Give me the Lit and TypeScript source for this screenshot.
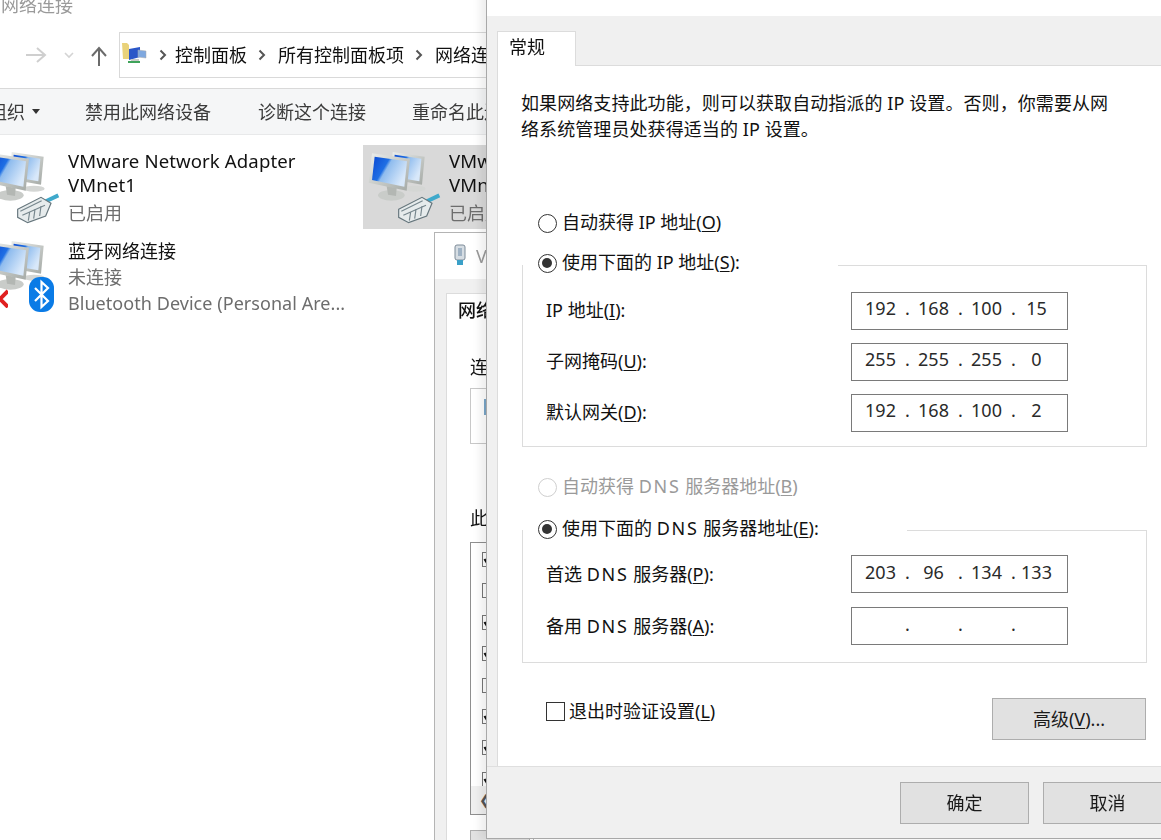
import { LitElement, html, css, svg } from "lit";
import { customElement } from "lit/decorators.js";

const FONT = css`"Noto Sans", "Noto Sans CJK SC", sans-serif`;

const netIcon = (plug: boolean) => svg`
<svg class="net" viewBox="0 0 270 270" width="90" height="90">
  <defs>
    <linearGradient id="scr" x1="0" y1="0" x2="1" y2="0.5">
      <stop offset="0" stop-color="#0a48d2"/><stop offset=".42" stop-color="#1f6fe4"/>
      <stop offset=".5" stop-color="#8fbcee"/><stop offset="1" stop-color="#d8e8fa"/>
    </linearGradient>
    <linearGradient id="bez" x1="0" y1="0" x2="1" y2="1">
      <stop offset="0" stop-color="#eceeec"/><stop offset="1" stop-color="#a4a9a5"/>
    </linearGradient>
  </defs>
  <path d="M98 36 L194 50 L186 134 L94 118Z" fill="url(#bez)"/>
  <path d="M104 44 L184 56 L178 124 L98 110Z" fill="url(#scr)"/>
  <ellipse cx="165" cy="146" rx="32" ry="9" fill="#d4d6d4"/>
  <ellipse cx="94" cy="166" rx="40" ry="16" fill="#c9ccc9"/>
  <path d="M80 138 L110 144 L108 168 L84 164Z" fill="#b3b7b3"/>
  <path d="M36 40 L150 56 L140 152 L26 128Z" fill="url(#bez)"/>
  <path d="M44 50 L141 64 L133 140 L36 120Z" fill="url(#scr)"/>
  ${plug ? svg`
  <path d="M196 186 L238 166" stroke="#3fa9cb" stroke-width="12" fill="none"/>
  <path d="M116 208 L186 172 L216 190 L200 228 L146 248 L116 232Z" fill="#e6ebec" stroke="#66767d" stroke-width="3.500"/>
  <path d="M124 214 L188 182 M130 226 L198 196 M148 242 L152 216 M164 236 L168 208 M182 228 L186 198" stroke="#76868d" stroke-width="3.500" fill="none"/>` : ""}
</svg>`;

const chev = (cls: string) => svg`<svg class="chev ${cls}" width="8" height="12" viewBox="0 0 8 12"><path d="M1.500 1.500L6 6l-4.500 4.500" stroke="#555" stroke-width="2" fill="none"/></svg>`;

@customElement("app-root")
export class AppRoot extends LitElement {
  static styles = css`
    :host { display: block; position: relative; width: 1161px; height: 840px; overflow: hidden;
      background: #fff; color: #111; font: 18px/24px ${FONT}; }
    .root { filter: blur(0.35px); width: 1161px; height: 840px; position: relative; overflow: hidden; }

    .explorer { display: flex; flex-direction: column; }
    .wintitle { margin: -7px 0 0 1px; line-height: 24px; color: #9a9a9a; padding-bottom: 15px; height: 24px; }
    .nav { display: flex; align-items: center; height: 46px; }
    .nav svg { display: block; }
    .navs { width: 119px; display: flex; align-items: center; flex: none; }
    .crumb { flex: 1; height: 46px; box-sizing: border-box; border: 1px solid #d9d9d9; display: flex; align-items: center; white-space: nowrap; overflow: hidden; }
    .crumb .home { margin-left: 2px; flex: none; }
    .crumb span { color: #111; }
    .chev { flex: none; }
    .chev.c1 { margin: 0 8px 0 11px; }
    .chev.c2 { margin: 0 12px 0 11px; }
    .chev.c3 { margin: 0 12px 0 11px; }
    .toolbar { margin-top: 10px; height: 47px; box-sizing: border-box; background: #f5f6f7; border-top: 1px solid #d9d9d9; border-bottom: 1px solid #e8e9ea;
      display: flex; align-items: center; white-space: nowrap; color: #3b3b3b; overflow: hidden; }
    .toolbar .org { margin-left: -11px; display: flex; align-items: center; gap: 7px; width: 96px; flex: none; }
    .toolbar .cmd { flex: none; }
    .toolbar .w1 { width: 173px; }
    .toolbar .w2 { width: 154px; }
    .tiles { display: grid; grid-template-columns: 381px 381px; margin: 10px 0 0 -18px; grid-auto-rows: min-content; row-gap: 5px; }
    .tile { display: flex; height: 84px; }
    .tile.sel { background: #d9d9d9; }
    .iconbox { position: relative; flex: none; width: 86px; }
    .iconbox .net { position: absolute; left: -3px; top: -5px; }
    .badge { position: absolute; }
    .badge.x { left: 18px; top: 54px; }
    .badge.bth { left: 47px; top: 43px; }
    .tx { padding-top: 4px; white-space: nowrap; }
    .tx div { height: 24px; line-height: 24px; }
    .tx .vm { font-size: 18.6px; letter-spacing: .1px; }
    .tx .sub { color: #6d6d6d; margin-top: 4px; }
    .tile.bt .tx { padding-top: 5px; }
    .tile.bt .tx .sub { margin-top: 1px; height: 26px; line-height: 26px; }
    .tile.bt .tx .sub.dev { margin-top: 0; letter-spacing: .05px; }

    .dlg1 { position: absolute; left: 434px; top: 232px; width: 100px; height: 640px; box-sizing: border-box; border: 1px solid #b4b4b4; background: #f0f0f0; overflow: hidden; white-space: nowrap; }
    .dlg1 .t { height: 46px; background: #fff; display: flex; align-items: center; padding-left: 18px; gap: 9px; color: #9a9a9a; }
    .dlg1 .t svg { flex: none; }
    .dlg1 .tab { margin: 14px 0 0 11px; height: 34px; background: #fff; width: 80px; padding-left: 11px; line-height: 32px; box-sizing: border-box; font-weight: 500; border: 1px solid #dcdcdc; border-bottom: 0; }
    .dlg1 .page { margin-left: 11px; height: 560px; background: #fff; padding: 28px 0 0 23px; box-sizing: border-box; border-left: 1px solid #dcdcdc; }
    .dlg1 .lab { height: 24px; line-height: 24px; }
    .dlg1 .conn { margin: 9px 0 0; height: 56px; box-sizing: border-box; border: 1px solid #c8c8c8; padding: 10px 0 0 13px; }
    .dlg1 .conn i { display: block; width: 6px; height: 16px; background: #7aa6c8; }
    .dlg1 .lab2 { margin-top: 62px; }
    .dlg1 .list { margin-top: 12px; height: 273px; box-sizing: border-box; border: 1px solid #8f8f8f; padding-top: 9px; position: relative; }
    .dlg1 .ck { display: block; width: 13px; height: 15px; margin: 0 0 16.4px 11px; border: 1px solid #777; box-sizing: border-box; background: #fff; }
    .dlg1 .ck svg { display: block; }
    .dlg1 .sb { position: absolute; left: 0; right: 0; bottom: 0; height: 28px; background: #f0f0f0; color: #555; font-size: 14px; line-height: 28px; padding-left: 8px; box-sizing: border-box; }
    .dlg1 .btn { margin-top: 15px; width: 60px; height: 24px; background: #e1e1e1; border: 1px solid #adadad; }

    .dlg2 { position: absolute; left: 486px; top: -30px; width: 700px; height: 869px; box-sizing: border-box; border: 1px solid #a8a8a8; border-right: 0; background: #f0f0f0;
      box-shadow: -6px 0 8px rgba(0,0,0,.07); }
    .dlg2 .t { height: 45px; background: #fff; padding-left: 125px; line-height: 38px; color: #444; white-space: nowrap; overflow: hidden; box-sizing: border-box; }
    .dlg2 .tabs { height: 50px; padding: 15px 0 0 10px; box-sizing: border-box; display: flex; align-items: flex-end; }
    .dlg2 .tab { width: 79px; height: 35px; background: #fff; border: 1px solid #dcdcdc; border-bottom: 0; box-sizing: border-box; padding-left: 12px; line-height: 30px; }
    .dlg2 .tab span { margin-left: -1px; }
    .dlg2 .tabs .rest { flex: 1; height: 1px; background: #dcdcdc; }
    .page2 { margin-left: 10px; height: 700px; background: #fff; border-left: 1px solid #dcdcdc; box-sizing: border-box; padding: 24px 0 0 24px; position: relative; }
    .intro { width: 600px; line-height: 26px; margin-left: -1px; letter-spacing: .08px; }
    .intro p { margin: 0; height: 26px; white-space: nowrap; }
    .auto { display: flex; align-items: center; height: 24px; white-space: nowrap; }
    .auto.a1 { margin-top: 68px; }
    .auto.a2 { margin-top: 27px; }
    .radio { width: 19px; height: 19px; box-sizing: border-box; border: 1.5px solid #333; border-radius: 50%; flex: none; margin: 3px 5px 0 16px; background: #fff; position: relative; }
    .radio.on::after { content: ""; position: absolute; left: 3px; top: 3px; width: 10px; height: 10px; border-radius: 50%; background: #333; }
    .radio.off { border-color: #cfcfcf; }
    .dis { color: #9a9a9a; }
    .dns { letter-spacing: 1.7px; }
    .group { border: 1px solid #dcdcdc; width: 625px; box-sizing: border-box; padding: 26px 0 0 23px; position: relative; }
    .group.g1 { margin-top: 31px; height: 182px; }
    .group.g2 { margin-top: 32px; height: 133px; padding-top: 24px; }
    .group.g2 .row { margin-bottom: 14px; }
    .group .legend { position: absolute; left: 0; top: -17px; background: #fff; display: flex; align-items: center; height: 26px; padding-right: 94px; white-space: nowrap; }
    .group.g1 .legend { padding-right: 98px; }
    .group.g2 .legend { top: -16px; padding-right: 88px; }
    .group .legend .radio { margin-left: 15px; }
    .group .row { display: flex; align-items: center; height: 38px; white-space: nowrap; justify-content: space-between; padding-right: 78px; margin-bottom: 13px; }
    .group .row:last-child { margin-bottom: 0; }
    .group.g1 .row > span { margin-top: -2px; }
    .ip { width: 217px; height: 38px; box-sizing: border-box; border: 1px solid #7a7a7a; display: grid; grid-template-columns: 53px 53px 53px 47px; padding: 0 0 5px 2px; align-items: center; text-align: center; background: #fff; color: #2a2a2a; }
    .group.g1 .ip { padding-bottom: 7px; }
    .ip b { font-weight: 400; position: relative; }
    .ip b + b::before { content: "."; position: absolute; left: -2px; }
    u { text-decoration-thickness: 1px; text-underline-offset: 2px; }
    .bottom { display: flex; justify-content: space-between; align-items: flex-start; width: 625px; margin-top: 35px; }
    .chk { display: flex; align-items: center; gap: 4px; white-space: nowrap; margin: 1px 0 0 24px; }
    .chk i { display: block; width: 19px; height: 19px; border: 1.5px solid #333; box-sizing: border-box; }
    .btn { background: #e1e1e1; border: 1px solid #adadad; box-sizing: border-box; text-align: center; color: #1a1a1a; }
    .adv { width: 154px; height: 42px; line-height: 40px; margin-right: 1px; }
    .foot { height: 72px; display: flex; padding: 15px 0 0 413px; gap: 14px; box-sizing: border-box; background: #f0f0f0; border-top: 1px solid #dfdfdf; }
    .foot .btn { width: 129px; height: 42px; line-height: 40px; flex: none; }
  `;

  private ip(a: string[]) {
    return html`<div class="ip">${a.map((x) => html`<b>${x || "\u00a0"}</b>`)}</div>`;
  }

  render() {
    return html`<div class="root">
      <div class="explorer">
        <div class="wintitle">网络连接</div>
        <div class="nav">
          <div class="navs">
            <svg width="119" height="46" viewBox="0 0 119 46" fill="none">
              <path d="M26 23H44M37 16l8 7-8 7" stroke="#cfcfcf" stroke-width="2"/>
              <path d="M65 21l4 4 4-4" stroke="#d4d4d4" stroke-width="1.6"/>
              <path d="M99 34V16M92 24l7-8 7 8" stroke="#6b6b6b" stroke-width="2"/>
            </svg>
          </div>
          <div class="crumb">
            <svg class="home" width="26" height="26" viewBox="0 0 26 26">
              <path d="M0 1h5l2 2v14H1z" fill="#e9d27a"/>
              <path d="M7 7l11-2v10L7 18z" fill="#2a56c8"/>
              <path d="M16 8l8 1v7l-8-1z" fill="#7fa8df" stroke="#aaa" stroke-width=".5"/>
              <path d="M6 19h12v2H6z" fill="#3fa35a"/>
              <path d="M9 17h8v2H9z" fill="#c9c9c9"/>
            </svg>
            ${chev("c1")}<span>控制面板</span>
            ${chev("c2")}<span>所有控制面板项</span>
            ${chev("c3")}<span>网络连接</span>
          </div>
        </div>
        <div class="toolbar">
          <div class="org">组织 <svg width="8" height="5" viewBox="0 0 8 5"><path d="M0 0h8L4 5z" fill="#333"/></svg></div>
          <div class="cmd w1">禁用此网络设备</div>
          <div class="cmd w2">诊断这个连接</div>
          <div class="cmd">重命名此连接</div>
        </div>
        <div class="tiles">
          <div class="tile">
            <div class="iconbox">${netIcon(true)}</div>
            <div class="tx"><div class="vm">VMware Network Adapter</div><div class="vm">VMnet1</div><div class="sub">已启用</div></div>
          </div>
          <div class="tile sel">
            <div class="iconbox">${netIcon(true)}</div>
            <div class="tx"><div class="vm">VMware Network Adapter</div><div class="vm">VMnet8</div><div class="sub">已启用</div></div>
          </div>
          <div class="tile bt">
            <div class="iconbox">${netIcon(false)}
              <svg class="badge x" width="8" height="20" viewBox="0 0 8 20"><path d="M-8 3L8 19M8 3L-8 19" stroke="#e02020" stroke-width="4"/></svg>
              <svg class="badge bth" width="25" height="35" viewBox="0 0 25 35"><rect width="25" height="35" rx="11" fill="#0a7be6"/><path d="M6 11l13 13-6.500 6V5L19 11 6 24" stroke="#fff" stroke-width="2.200" fill="none"/></svg>
            </div>
            <div class="tx"><div>蓝牙网络连接</div><div class="sub">未连接</div><div class="sub dev">Bluetooth Device (Personal Are...</div></div>
          </div>
        </div>
      </div>

      <div class="dlg1">
        <div class="t"><svg width="14" height="24" viewBox="0 0 14 24"><rect x="2" y="1" width="10" height="15" rx="2" fill="#d6dde3" stroke="#7d8b98"/><rect x="4" y="16" width="6" height="5" fill="#3aa0c8"/><rect x="5" y="4" width="4" height="8" fill="#9fb2c4"/></svg><span>VMware</span></div>
        <div class="tab">网络</div>
        <div class="page">
          <div class="lab">连接时使用</div>
          <div class="conn"><i></i></div>
          <div class="lab lab2">此连接使用下列项目</div>
          <div class="list">
            ${[1, 0, 1, 1, 0, 1, 1, 1].map((c) => html`<span class="ck">${c ? svg`<svg width="11" height="13" viewBox="0 0 11 13"><path d="M1.500 6l2.500 4 5-8" stroke="#111" stroke-width="2.200" fill="none"/></svg>` : ""}</span>`)}
            <div class="sb">❮</div>
          </div>
          <div class="btn"></div>
        </div>
      </div>

      <div class="dlg2">
        <div class="t">Internet 协议版本 4 (TCP/IPv4) 属性</div>
        <div class="tabs"><div class="tab"><span>常规</span></div><div class="rest"></div></div>
        <div class="page2">
          <div class="intro">
            <p>如果网络支持此功能，则可以获取自动指派的 IP 设置。否则，你需要从网</p>
            <p>络系统管理员处获得适当的 IP 设置。</p>
          </div>
          <div class="auto a1"><span class="radio"></span><span>自动获得 IP 地址(<u>O</u>)</span></div>
          <div class="group g1">
            <div class="legend"><span class="radio on"></span><span>使用下面的 IP 地址(<u>S</u>):</span></div>
            <div class="row"><span>IP 地址(<u>I</u>):</span>${this.ip(["192", "168", "100", "15"])}</div>
            <div class="row"><span>子网掩码(<u>U</u>):</span>${this.ip(["255", "255", "255", "0"])}</div>
            <div class="row"><span>默认网关(<u>D</u>):</span>${this.ip(["192", "168", "100", "2"])}</div>
          </div>
          <div class="auto a2 dis"><span class="radio off"></span><span>自动获得 <span class="dns">DNS</span> 服务器地址(<u>B</u>)</span></div>
          <div class="group g2">
            <div class="legend"><span class="radio on"></span><span>使用下面的 <span class="dns">DNS</span> 服务器地址(<u>E</u>):</span></div>
            <div class="row"><span>首选 <span class="dns">DNS</span> 服务器(<u>P</u>):</span>${this.ip(["203", "96", "134", "133"])}</div>
            <div class="row"><span>备用 <span class="dns">DNS</span> 服务器(<u>A</u>):</span>${this.ip(["", "", "", ""])}</div>
          </div>
          <div class="bottom">
            <div class="chk"><i></i><span>退出时验证设置(<u>L</u>)</span></div>
            <div class="btn adv">高级(<u>V</u>)...</div>
          </div>
        </div>
        <div class="foot"><div class="btn">确定</div><div class="btn">取消</div></div>
      </div>
    </div>`;
  }
}
